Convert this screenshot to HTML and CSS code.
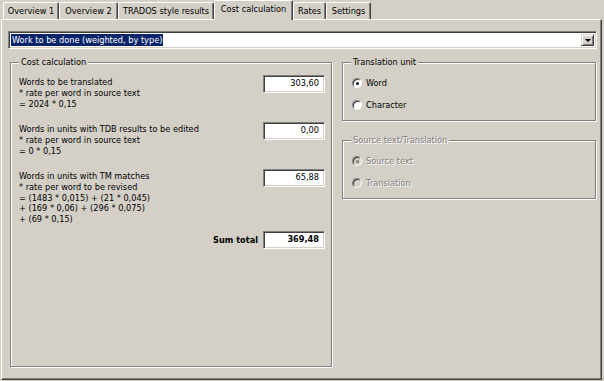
FILE: index.html
```html
<!DOCTYPE html>
<html lang="en">
<head>
    <meta charset="UTF-8">
    <title>Cost calculation</title>
    <link rel="stylesheet" href="styles.css">
</head>
<body>
    <div class="tabs">
        <div class="tab w1">Overview 1</div>
        <div class="tab w2">Overview 2</div>
        <div class="tab w3">TRADOS style results</div>
        <div class="tab w4 active">Cost calculation</div>
        <div class="tab w5">Rates</div>
        <div class="tab w6">Settings</div>
    </div>
    <div class="panel">
        <div class="combo">
            <span class="selected">Work to be done (weighted, by type)</span>
            <span class="drop"><span class="arrow"></span></span>
        </div>
        <div class="columns">
            <div class="group cost">
                <div class="legend">Cost calculation</div>
                <div class="row r1">
                    <div class="formula">Words to be translated<br>* rate per word in source text<br>= 2024 * 0,15</div>
                    <div class="field">303,60</div>
                </div>
                <div class="row r2">
                    <div class="formula">Words in units with TDB results to be edited<br>* rate per word in source text<br>= 0 * 0,15</div>
                    <div class="field">0,00</div>
                </div>
                <div class="row r3">
                    <div class="formula">Words in units with TM matches<br>* rate per word to be revised<br>= (1483 * 0,015) + (21 * 0,045)<br>+ (169 * 0,06) + (296 * 0,075)<br>+ (69 * 0,15)</div>
                    <div class="field">65,88</div>
                </div>
                <div class="sum">
                    <span>Sum total</span>
                    <div class="field">369,48</div>
                </div>
            </div>
            <div class="side">
                <div class="group unit">
                    <div class="legend">Translation unit</div>
                    <div class="option first"><span class="radio checked"></span>Word</div>
                    <div class="option second"><span class="radio"></span>Character</div>
                </div>
                <div class="group source disabled">
                    <div class="legend">Source text/Translation</div>
                    <div class="option first"><span class="radio checked"></span>Source text</div>
                    <div class="option second"><span class="radio"></span>Translation</div>
                </div>
            </div>
        </div>
    </div>
</body>
</html>
```

FILE: styles.css
```css
body {
    margin: 0;
    background-color: #d4d0c8;
    font-family: "DejaVu Sans", sans-serif;
    font-size: 8.2px;
    color: #000;
}
.tabs {
    display: flex;
    align-items: flex-end;
    height: 19px;
    padding-left: 3px;
}
.tab {
    box-sizing: border-box;
    height: 17px;
    line-height: 16px;
    text-align: center;
    white-space: nowrap;
    border-top: 1px solid #fff;
    border-left: 1px solid #fff;
    border-right: 1px solid #404040;
    border-radius: 2px 2px 0 0;
    box-shadow: inset -1px 0 #808080;
}
.w1 { width: 56px; }
.w2 { width: 59px; }
.w3 { width: 96px; }
.w4 { width: 79px; }
.w5 { width: 33px; }
.w6 { width: 45px; }
.tab.active {
    height: 20px;
    line-height: 17px;
    margin-bottom: -1px;
    position: relative;
    z-index: 1;
    background-color: #d4d0c8;
}
.panel {
    box-sizing: border-box;
    width: 601px;
    height: 361px;
    margin-left: 1px;
    padding: 11px 0 0 6px;
    border-top: 1px solid #fff;
    border-left: 1px solid #fff;
    border-right: 1px solid #404040;
    border-bottom: 1px solid #404040;
    box-shadow: inset -1px -1px #808080;
}
.combo {
    box-sizing: border-box;
    width: 589px;
    height: 18px;
    display: flex;
    align-items: center;
    justify-content: space-between;
    padding: 0 2px;
    background: #fff;
    border: 1px solid;
    border-color: #808080 #fff #fff #808080;
    box-shadow: inset 1px 1px #404040, inset -1px -1px #d4d0c8;
}
.selected {
    background-color: #0a246a;
    color: #fff;
    padding: 0 1px;
    line-height: 12px;
}
.drop {
    box-sizing: border-box;
    width: 13px;
    height: 12px;
    display: flex;
    align-items: center;
    justify-content: center;
    background-color: #d4d0c8;
    border: 1px solid;
    border-color: #d4d0c8 #404040 #404040 #d4d0c8;
    box-shadow: inset 1px 1px #fff, inset -1px -1px #808080;
}
.arrow {
    width: 0;
    height: 0;
    border-left: 3px solid transparent;
    border-right: 3px solid transparent;
    border-top: 3px solid #000;
}
.columns {
    display: flex;
    margin-top: 13px;
    padding-left: 2px;
}
/* etched frame, like a windows group box */
.group {
    box-sizing: border-box;
    border: 1px solid #808080;
    box-shadow: inset 1px 1px #fff, 1px 1px #fff;
}
.legend {
    width: fit-content;
    margin-top: -6px;
    padding: 0 2px;
    line-height: 11px;
    background-color: #d4d0c8;
}
.cost {
    width: 322px;
    height: 305px;
    padding: 0 6px 0 8px;
}
.row {
    display: flex;
    justify-content: space-between;
    align-items: flex-start;
}
.r1 {
    margin-top: 7px;
    height: 47px;
}
.r2 { height: 47px; }
.r3 { height: 62px; }
.formula {
    padding-top: 2px;
    line-height: 10.75px;
    white-space: nowrap;
}
.field {
    box-sizing: border-box;
    width: 62px;
    height: 18px;
    padding-right: 5px;
    line-height: 15px;
    text-align: right;
    background: #fff;
    border: 1px solid;
    border-color: #808080 #fff #fff #808080;
    box-shadow: inset 1px 1px #404040, inset -1px -1px #d4d0c8;
}
.sum {
    display: flex;
    justify-content: flex-end;
    align-items: center;
    gap: 5px;
    font-weight: bold;
}
.side {
    width: 254px;
    margin-left: 10px;
    display: flex;
    flex-direction: column;
}
.unit,
.source {
    height: 59px;
    padding: 0 8px;
}
.source {
    margin-top: 19px;
}
.option {
    display: flex;
    align-items: center;
    gap: 4px;
    height: 12px;
    margin-left: 1px;
}
.first { margin-top: 9px; }
.second { margin-top: 10px; }
.radio {
    box-sizing: border-box;
    width: 10px;
    height: 10px;
    display: flex;
    align-items: center;
    justify-content: center;
    border-radius: 50%;
    background: #fff;
    border: 1px solid;
    border-color: #808080 #fff #fff #808080;
    box-shadow: inset 1px 1px #404040;
}
.radio.checked::after {
    content: "";
    width: 3px;
    height: 3px;
    border-radius: 50%;
    background: #000;
}
.disabled {
    color: #808080;
    text-shadow: 1px 1px #fff;
}
.disabled .radio {
    background: #d4d0c8;
}
.disabled .radio.checked::after {
    background: #808080;
}
```
